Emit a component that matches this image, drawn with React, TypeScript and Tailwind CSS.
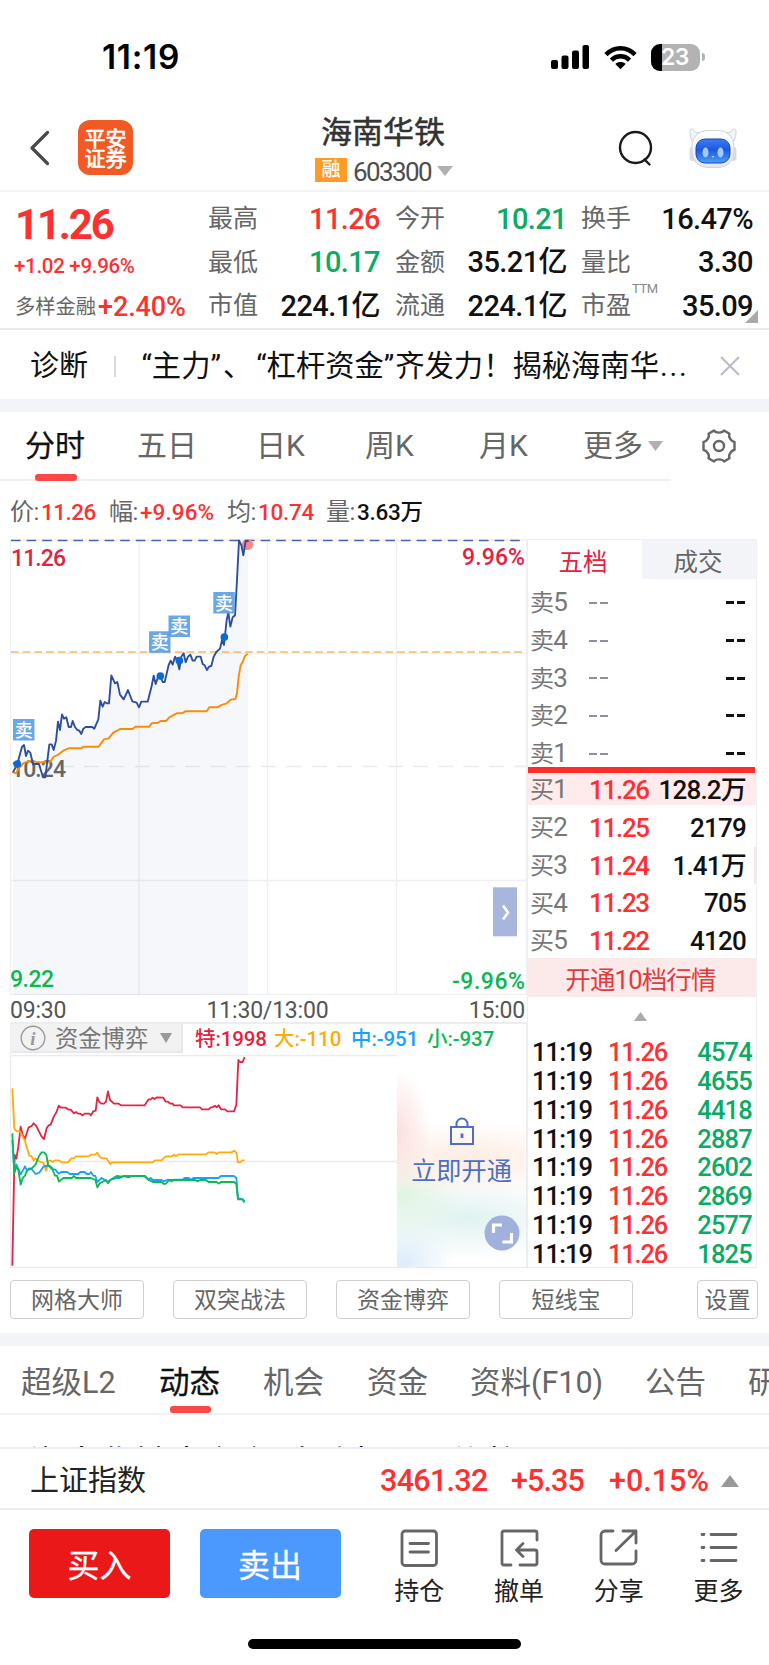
import React from "react";

const F = "font-['Roboto','Noto_Sans_CJK_SC',sans-serif]";

type Cell = [string, string, string];
const quotes: { w: string; pad: string; rows: Cell[] }[] = [
  {
    w: "w-[172px]",
    pad: "ml-0",
    rows: [
      ["最高", "11.26", "text-[#ff3030]"],
      ["最低", "10.17", "text-[#0aab64]"],
      ["市值", "224.1亿", "text-[#111]"],
    ],
  },
  {
    w: "w-[172px]",
    pad: "ml-[15px]",
    rows: [
      ["今开", "10.21", "text-[#0aab64]"],
      ["金额", "35.21亿", "text-[#111]"],
      ["流通", "224.1亿", "text-[#111]"],
    ],
  },
  {
    w: "w-[172px]",
    pad: "ml-[14px]",
    rows: [
      ["换手", "16.47%", "text-[#111]"],
      ["量比", "3.30", "text-[#111]"],
      ["市盈", "35.09", "text-[#111]"],
    ],
  },
];

const sells = ["卖5", "卖4", "卖3", "卖2", "卖1"];
const buys = [
  ["买1", "11.26", "128.2万"],
  ["买2", "11.25", "2179"],
  ["买3", "11.24", "1.41万"],
  ["买4", "11.23", "705"],
  ["买5", "11.22", "4120"],
];
const ticks = ["4574", "4655", "4418", "2887", "2602", "2869", "2577", "1825"];

function Down({ c = "#b0b0b0", w = 15, h = 10, up = false }: { c?: string; w?: number; h?: number; up?: boolean }) {
  return (
    <svg width={w} height={h} viewBox="0 0 16 10" preserveAspectRatio="none" className="shrink-0">
      <path d={up ? "M0 10h16L8 0z" : "M0 0h16L8 10z"} fill={c} />
    </svg>
  );
}

function StatusBar() {
  return (
    <div className="flex h-[100px] items-start pt-[36px]">
      <div className="ml-[102px] w-[449px] font-['Inter'] text-[33.500px] leading-[43px] font-semibold tracking-[0.700px] text-black">11:19</div>
      <svg width="38" height="24" viewBox="0 0 38 24" className="mt-[9px]">
        <rect x="0" y="15" width="7" height="9" rx="2" />
        <rect x="10.5" y="10.500" width="7" height="13.500" rx="2" />
        <rect x="21" y="5.500" width="7" height="18.500" rx="2" />
        <rect x="31.500" y="0" width="6.500" height="24" rx="2" />
      </svg>
      <svg width="33" height="25" viewBox="0 0 34 25" className="mt-[9px] ml-[15px]" fill="none" stroke="#000" strokeWidth="4.600">
        <path d="M2 9.500C10.500 0.800 23.500 0.800 32 9.500" />
        <path d="M7.600 15.200C13 10 21 10 26.400 15.200" />
        <path d="M17 24.500l-5.300-5.300c3-2.700 7.600-2.700 10.600 0z" fill="#000" stroke="none" />
      </svg>
      <div className="relative mt-[8px] ml-[14px] h-[27px] w-[49px] overflow-hidden rounded-[9px] bg-[#b3b3b3]">
        <div className="h-full w-[11px] bg-black" />
        <div className="absolute inset-0 pr-[1px] text-center font-['Inter'] text-[23px] leading-[27px] font-semibold tracking-[-0.500px] text-white">23</div>
      </div>
      <div className="mt-[17px] ml-[2px] h-[8px] w-[3px] rounded-r-[3px] bg-[#b3b3b3]" />
    </div>
  );
}

function Robot() {
  return (
    <svg width="48" height="40" viewBox="0 0 48 40">
      <defs>
        <linearGradient id="face" x1="0" y1="0" x2="0" y2="1">
          <stop offset="0" stopColor="#3f7df0" />
          <stop offset="0.450" stopColor="#1f58df" />
          <stop offset="1" stopColor="#4aa0f8" />
        </linearGradient>
        <linearGradient id="shell" x1="0" y1="0" x2="0" y2="1">
          <stop offset="0" stopColor="#fff" />
          <stop offset="1" stopColor="#e3e6ec" />
        </linearGradient>
      </defs>
      <path d="M3 13C.5 7 .5 2 2 1c1.800-1 3.500 3 6 3.500h32c2.500-.5 4.200-4.500 6-3.500 1.500 1 1.500 6-1 12z" fill="#f3f4f7" stroke="#cfd3da" strokeWidth="1" />
      <rect x="0.600" y="19" width="6" height="14" rx="3" fill="#d5d9e1" />
      <rect x="41.400" y="19" width="6" height="14" rx="3" fill="#d5d9e1" />
      <rect x="3" y="2.500" width="42" height="37" rx="15" fill="url(#shell)" stroke="#d0d4db" strokeWidth="1" />
      <rect x="7" y="11" width="34" height="24" rx="9" fill="url(#face)" stroke="#1746b8" strokeWidth="1" />
      <ellipse cx="16.500" cy="24.500" rx="3" ry="5" fill="#a0cbfa" />
      <ellipse cx="31.500" cy="24.500" rx="3" ry="5" fill="#a0cbfa" />
      <path d="M22.800 28h2.400L24 30z" fill="#cfe6ff" />
    </svg>
  );
}

function NavBar() {
  return (
    <div className="flex h-[92px] items-start border-b-2 border-[#f3f3f5]">
      <svg width="21" height="36" viewBox="0 0 21 36" className="mt-[30px] ml-[29px]" fill="none" stroke="#4a4a4a" strokeWidth="3.200" strokeLinecap="round" strokeLinejoin="round">
        <path d="M18.500 2.500L3 18l15.500 15.500" />
      </svg>
      <div className="mt-[20px] ml-[28px] flex h-[55px] w-[55px] flex-col items-center rounded-[12px] bg-[#f15a24] pt-[9px] text-[21px] leading-[20px] text-white [-webkit-text-stroke:0.700px_white]">
        <span>平安</span>
        <span>证券</span>
      </div>
      <div className="ml-[181px] flex w-[140px] flex-col">
        <div className="mt-[13px] ml-[7px] text-[31px] leading-[39px] whitespace-nowrap text-[#333] [-webkit-text-stroke:0.500px_#333]">海南华铁</div>
        <div className="mt-[5px] flex h-[27px] items-center">
          <div className="mt-[-1px] ml-[1px] h-[24px] w-[32px] bg-[#ff9a26] text-center text-[19px] leading-[24px] font-medium text-white">融</div>
          <div className="ml-[6px] w-[84px] pt-[3px] text-[26px] leading-[27px] tracking-[-1.600px] text-[#4d4d4d]">603300</div>
          <Down w={16} h={10} />
        </div>
      </div>
      <svg width="36" height="37" viewBox="0 0 36 37" className="mt-[30px] ml-[164px]" fill="none" stroke="#1a1a1a" strokeWidth="2.400" strokeLinecap="round">
        <circle cx="17.500" cy="17.500" r="15.500" />
        <path d="M26.500 29.500l5 5" />
      </svg>
      <div className="mt-[28px] ml-[35px]">
        <Robot />
      </div>
    </div>
  );
}

function Quote() {
  return (
    <div className="relative flex h-[138px] border-b-2 border-[#e8e8ef]">
      <div className="flex w-[208px] flex-col text-[#ff3030]">
        <div className="mt-[9px] ml-[15px] text-[42px] leading-[48px] font-bold tracking-[-2.200px]">11.26</div>
        <div className="mt-[4px] ml-[14px] text-[20.500px] leading-[26px] font-medium tracking-[-0.300px] whitespace-nowrap">+1.02 +9.96%</div>
        <div className="mt-[10px] ml-[15px] flex items-center whitespace-nowrap">
          <span className="w-[83px] text-[20.300px] leading-[36px] text-[#666]">多样金融</span>
          <span className="text-[27px] leading-[36px] font-medium tracking-[-0.100px]">+2.40%</span>
        </div>
      </div>
      <div className="flex pt-[5px]">
        {quotes.map((q, i) => (
          <div key={i} className={`${q.w} ${q.pad}`}>
            {q.rows.map(([l, v, c]) => (
              <div key={l} className="flex h-[43.500px] items-center justify-between">
                <span className="pt-[1px] text-[25px] leading-[40px] text-[#666]">{l}</span>
                <span className={`text-[29px] leading-[40px] font-medium tracking-[-0.600px] ${c}`}>{v}</span>
              </div>
            ))}
          </div>
        ))}
      </div>
      <span className="absolute top-[88px] left-[632px] text-[13px] leading-[18px] tracking-[-0.400px] text-[#888]">TTM</span>
      <svg width="13" height="13" className="absolute top-[118px] left-[745px]">
        <path d="M13 0v13H0z" fill="#a9a9a9" />
      </svg>
    </div>
  );
}

function News() {
  return (
    <div className="flex h-[69px] items-center pt-[3px] pl-[30px] text-[29px] leading-[40px] whitespace-nowrap text-[#111]">
      <span className="w-[84px]">诊断</span>
      <span className="mr-[26px] h-[21px] w-[1.500px] bg-[#d8d8dc]" />
      <span className="w-[578px] text-[29.300px]">
        “主力”<span className="ml-[2px] mr-[4px]">、</span>“杠杆资金”<span className="ml-[1px]">齐发力！揭秘海南华</span>
        <span className="ml-[1px] tracking-[1.800px]">...</span>
      </span>
      <svg width="20" height="20" viewBox="0 0 20 20" stroke="#b9b9cb" strokeWidth="2">
        <path d="M1 1l18 18M19 1L1 19" />
      </svg>
    </div>
  );
}

function ChartTabs() {
  return (
    <div className="flex h-[69px]">
      <div className="relative flex w-[671px] items-center border-b-2 border-[#f0f0f2] text-[30px] leading-[40px] whitespace-nowrap text-[#666]">
        <span className="ml-[25px] w-[112px] text-[#111] [-webkit-text-stroke:0.250px_#111]">分时</span>
        <span className="w-[119px]">五日</span>
        <span className="w-[109px]">日K</span>
        <span className="w-[114px]">周K</span>
        <span className="w-[104px]">月K</span>
        <span className="w-[65px]">更多</span>
        <Down w={15} h={10} />
        <span className="absolute top-[62px] left-[35px] h-[7px] w-[42px] rounded-[3px] bg-[#fc4747]" />
      </div>
      <svg width="36" height="36" viewBox="0 0 36 36" className="mt-[16px] ml-[30px]" fill="none" stroke="#666" strokeWidth="2.400" strokeLinejoin="round">
        <path d="M13 2.500c1.500 2.800 8.500 2.800 10 0l5.500 3.300c-1.500 3 1.700 8 5 8.200v8c-3.300.2-6.500 5.200-5 8.200L23 33.500c-1.500-2.800-8.500-2.800-10 0l-5.500-3.300c1.500-3-1.700-8-5-8.200v-8c3.300-.2 6.500-5.200 5-8.200z" />
        <circle cx="18" cy="18" r="5" />
      </svg>
    </div>
  );
}

function Legend() {
  const items = [
    ["价:", "11.26", "text-[#ff3030] tracking-[-0.500px]", "w-[99px]"],
    ["幅:", "+9.96%", "text-[#ff3030] tracking-[0.100px]", "w-[118px]"],
    ["均:", "10.74", "text-[#ff3030] tracking-[-0.300px]", "w-[99px]"],
    ["量:", "3.63万", "text-[#111] tracking-[-0.300px]", "w-[110px]"],
  ];
  return (
    <div className="flex h-[59px] items-center pt-[3px] pl-[10px] text-[22.500px] leading-[30px] whitespace-nowrap">
      {items.map(([l, v, c, w]) => (
        <div key={l} className={`${w} flex`}>
          <span className="w-[31px] text-[24px] tracking-[-0.500px] text-[#666]">{l}</span>
          <span className={`font-medium ${c}`}>{v}</span>
        </div>
      ))}
    </div>
  );
}

const price =
  "40,725 52,702 66,650 72,645 78,678 84,662 91,668 99,702 117,702 129,742 136,742 148,643 155,643 161,660 168,632 174,575 180,600 186,553 192,566 199,562 206,591 213,591 218,573 225,591 232,600 238,602 244,612 250,596 257,591 277,591 283,596 295,568 301,512 308,530 314,516 320,520 327,520 334,436 345,460 352,456 360,494 371,508 384,480 397,514 410,518 417,532 424,515 443,515 455,468 461,437 467,462 474,442 481,440 488,456 494,456 506,405 512,392 518,404 525,380 531,390 538,418 544,380 551,370 557,397 564,380 571,374 578,392 584,392 590,380 602,380 608,402 614,406 621,420 627,410 634,408 641,380 649,366 660,356 666,330 672,345 680,270 685,248 691,290 698,262 705,256 711,150 717,31 724,45 730,76 737,33 744,33";
const avg =
  "40,727 48,730 56,716 70,700 82,695 96,691 112,697 150,697 160,681 176,673 190,662 206,655 244,655 250,650 296,650 312,628 326,625 340,608 360,597 398,597 406,590 448,590 455,580 474,578 482,573 498,573 508,562 530,550 548,549 556,544 620,544 628,532 652,532 662,526 680,520 692,509 706,507 711,490 716,440 722,406 728,396 735,378 742,373";

function Mark({ x, y }: { x: number; y: number }) {
  return (
    <g>
      <rect x={x} y={y} width="21.500" height="21.500" fill="#5a9fe2" fillOpacity="0.900" />
      <text x={x + 10.75} y={y + 17.5} fontSize="18" fontWeight="500" fill="#fff" textAnchor="middle">卖</text>
    </g>
  );
}

function PriceChart() {
  return (
    <svg width="517" height="456" viewBox="10 539 517 456" className={`block ${F}`}>
      <g stroke="#efeff1" strokeWidth="1.300">
        <path d="M10.500 539.500V995M139 540V994M267.500 540V994M396.500 540V994M526.500 540V995M10 540H527M10 653.300H527M10 880.500H527M10 994.300H527" />
        <path d="M11 766.500H527" stroke="#ececee" strokeDasharray="15.300 10" strokeDashoffset="3" />
      </g>
      <g transform="translate(0 530) scale(0.33333)">
        <polygon points={`40,1394 ${price} 744,1394`} fill="#5b72b8" fillOpacity="0.055" />
      </g>
      <text x="11" y="776.500" fontSize="23" fontWeight="500" fill="#666" textLength="55" lengthAdjust="spacing">10.24</text>
      <path d="M11 540.500H522" stroke="#4664ae" strokeWidth="1.400" strokeDasharray="9.600 6" />
      <path d="M11 652H524" stroke="#fbb765" strokeWidth="1.500" strokeDasharray="7.700 4" />
      <circle cx="247.500" cy="544.500" r="5.600" fill="#ff8585" />
      <g transform="translate(0 530) scale(0.33333)" fill="none" strokeLinejoin="round" strokeLinecap="round">
        <polyline points={avg} stroke="#fb8c0a" strokeWidth="5.800" />
        <polyline points={price} stroke="#2c4e9b" strokeWidth="5.600" />
        <g fill="#0a6bd2">
          <circle cx="52" cy="702" r="11.500" />
          <circle cx="481" cy="438" r="11.500" />
          <circle cx="538" cy="392" r="11.500" />
          <circle cx="673" cy="321" r="11.500" />
        </g>
      </g>
      <Mark x={13} y={719} />
      <Mark x={149} y={631.300} />
      <Mark x={168.500} y={615.500} />
      <Mark x={213.300} y={592} />
      <g fontSize="23" fontWeight="500">
        <text x="11" y="566.300" fill="#e6213f" textLength="55" lengthAdjust="spacing">11.26</text>
        <text x="525" y="564.500" fill="#e6213f" textAnchor="end" textLength="63" lengthAdjust="spacing">9.96%</text>
        <text x="10" y="987" fill="#08b850" textLength="44" lengthAdjust="spacing">9.22</text>
        <text x="525" y="989" fill="#08b850" textAnchor="end" textLength="73" lengthAdjust="spacing">-9.96%</text>
      </g>
      <rect x="493" y="887.300" width="24" height="49" fill="#a8b6de" />
      <path d="M503 905.500l5 7-5 7" fill="none" stroke="#fff" strokeWidth="2.600" />
    </svg>
  );
}

const red =
  "37,857 42,600 44,525 49,536 55,500 62,440 68,465 75,476 86,442 95,438 101,430 108,437 125,470 132,477 140,445 146,436 152,434 160,413 170,395 176,377 184,383 198,383 206,389 212,389 222,400 228,396 234,401 241,401 248,406 254,401 268,401 273,406 280,394 287,392 292,352 298,366 305,371 312,371 318,365 324,334 330,360 342,371 356,371 363,376 434,376 446,358 452,358 458,353 464,357 470,352 490,353 497,365 504,365 510,371 517,370 522,376 542,376 548,382 600,382 606,388 626,388 632,382 638,382 645,377 650,382 656,376 663,388 675,388 682,394 702,394 709,375 715,240 720,246 728,246 734,231";
const gold =
  "37,325 43,446 49,453 60,454 75,483 88,527 95,529 101,541 107,535 119,545 131,549 138,572 146,543 152,541 158,546 164,541 178,541 184,547 204,547 214,535 221,535 228,529 267,529 273,524 286,524 292,518 299,530 306,535 319,535 331,552 337,547 458,547 465,541 484,541 497,529 516,529 522,524 528,529 535,523 618,523 625,517 644,517 650,522 656,517 695,517 702,512 709,518 714,547 720,547 727,541 734,541";
const blue =
  "37,480 43,575 49,553 62,583 75,559 81,572 87,565 95,567 107,582 119,577 130,560 138,558 150,558 160,568 165,568 176,581 184,576 202,576 209,582 235,582 241,576 254,576 260,582 268,582 273,576 280,587 286,588 292,606 305,594 314,600 324,606 331,600 350,594 360,594 371,588 434,588 446,600 452,594 458,600 484,600 492,604 504,599 516,604 522,599 548,599 554,594 566,594 573,600 580,594 656,594 663,588 702,588 709,594 714,655 728,658 733,668";
const green =
  "37,460 43,580 49,559 55,570 62,614 68,594 75,587 81,571 95,565 107,553 117,528 125,517 132,517 139,524 144,555 158,570 165,587 171,587 177,605 190,594 216,594 221,588 228,594 273,594 286,600 292,622 299,610 318,600 324,610 331,600 350,588 366,590 371,588 386,592 395,588 434,588 446,599 458,606 484,606 492,612 498,611 508,600 586,600 593,604 600,600 618,600 626,606 650,606 656,611 663,606 702,606 709,612 714,658 728,658 734,664";

function FlowChart() {
  return (
    <div className="relative h-[213px] w-[517px]">
      <svg width="517" height="213" viewBox="10 1055 517 213" className="block">
        <path d="M10.500 1055V1268M10 1055.700H397M10 1161.500H397M10 1267.300H527M526.500 1055V1268" stroke="#ebebed" strokeWidth="1.300" />
        <g transform="translate(0 980) scale(0.33333)" fill="none" strokeWidth="5.500" strokeLinejoin="round">
          <polyline points={red} stroke="#e32643" />
          <polyline points={gold} stroke="#ffab0e" />
          <polyline points={blue} stroke="#17a2fb" />
          <polyline points={green} stroke="#0cb957" />
        </g>
      </svg>
      <div className="absolute top-0 left-[387px] flex h-[212px] w-[129px] flex-col items-center bg-white bg-[radial-gradient(ellipse_34px_62px_at_0%_36%,#fbdede,transparent),radial-gradient(ellipse_125px_38px_at_55%_49%,#fdebe1,transparent),radial-gradient(ellipse_60px_44px_at_5%_66%,#e0f4e2,transparent),radial-gradient(ellipse_120px_42px_at_55%_77%,#e0f2f1,transparent),radial-gradient(ellipse_50px_46px_at_5%_98%,#dcecfa,transparent)]">
        <svg width="24" height="28" viewBox="0 0 24 28" className="mt-[62px]" fill="none" stroke="#4c70bf" strokeWidth="2">
          <rect x="1" y="10" width="22" height="17" />
          <path d="M6.500 10V7a5.500 5.500 0 0 1 11 0v3" />
          <path d="M12 16.500v4.500" strokeWidth="2.800" />
        </svg>
        <div className="mt-[9px] text-[25.200px] leading-[36px] text-[#4c70bf]">立即开通</div>
        <svg width="36" height="36" viewBox="0 0 36 36" className="absolute top-[160px] left-[87px]" fill="none" stroke="#fff" strokeWidth="3.200">
          <circle cx="18" cy="18" r="17.500" fill="#9fb1dc" stroke="none" />
          <path d="M9.500 18V10H18M18.500 27H27.500V18" />
        </svg>
      </div>
    </div>
  );
}

function LeftPanel() {
  return (
    <div className="w-[517px]">
      <PriceChart />
      <div className="flex h-[29px] justify-between border-b-2 border-[#ededef] pr-[2px] text-[23px] leading-[31px] tracking-[-0.200px] text-[#555]">
        <span className="w-[100px]">09:30</span>
        <span>11:30/13:00</span>
        <span className="w-[100px] text-right">15:00</span>
      </div>
      <div className="flex h-[31px] items-start border-x border-[#ededef] text-[20.500px] leading-[30px] font-medium tracking-[-0.100px] whitespace-nowrap">
        <div className="mr-[12px] flex h-[29px] w-[172px] items-center border-r-2 border-b-2 border-[#e8e8ea] bg-[#f2f2f3] text-[23.300px] leading-[28px] font-normal tracking-normal text-[#777]">
          <svg width="26" height="26" viewBox="0 0 26 26" className="mr-[9px] ml-[9px]">
            <circle cx="13" cy="13" r="11.800" fill="none" stroke="#999" strokeWidth="1.400" />
            <text x="13" y="19.500" fontSize="19" fontStyle="italic" fontWeight="700" fontFamily="Liberation Serif" fill="#999" textAnchor="middle">i</text>
          </svg>
          <span className="w-[105px] pt-[2px]">资金博弈</span>
          <Down w={12} h={10} c="#999" />
        </div>
        <span className="w-[79px] text-[#e6213f]">特:1998</span>
        <span className="w-[77px] text-[#ffab0e]">大:-110</span>
        <span className="w-[76px] text-[#17a2fb]">中:-951</span>
        <span className="text-[#0cb957]">小:-937</span>
      </div>
      <FlowChart />
    </div>
  );
}

function OrderBook() {
  return (
    <div className="flex h-[729px] w-[230px] flex-col border border-[#efeff1] text-[25.500px] leading-[36px] tracking-[-0.800px]">
      <div className="flex h-[39px] text-center text-[24.500px] leading-[45px] tracking-normal">
        <div className="w-[114px] pr-[4px] text-[#e6213f]">五档</div>
        <div className="flex-1 bg-[#f2f4f8] pr-[2px] text-[#666]">成交</div>
      </div>
      <div className="flex h-[188px] flex-col pt-[5px]">
        {sells.map((s) => (
          <div key={s} className="flex h-[37.700px] shrink-0 items-center pr-[11px] pl-[2px]">
            <span className="w-[59px] text-[26px] text-[#777]"><span className="text-[24px]">{s[0]}</span>{s[1]}</span>
            <span className="flex w-[60px] gap-[3px]"><i className="h-[2px] w-[8px] bg-[#8f8f9c]" /><i className="h-[2px] w-[8px] bg-[#8f8f9c]" /></span>
            <span className="flex flex-1 justify-end gap-[3px]"><i className="h-[3px] w-[8px] bg-[#111]" /><i className="h-[3px] w-[8px] bg-[#111]" /></span>
          </div>
        ))}
      </div>
      <div className="mr-[1px] h-[6px] shrink-0 bg-[#fb2c2c]" />
      <div className="flex flex-col">
        {buys.map(([l, p, v], i) => (
          <div key={l} className={`flex items-center pl-[2px] ${i === 0 ? "mb-[4px] h-[32px] bg-[#ffebeb] pt-[1px]" : "h-[37.700px]"} ${i === 2 ? "border-r-2 border-[#fde3e3] pr-[8px]" : "pr-[10px]"}`}>
            <span className="w-[59px] text-[26px] text-[#777]"><span className="text-[24px]">{l[0]}</span>{l[1]}</span>
            <span className="text-[26px] font-medium tracking-[-1.300px] text-[#ff3030]">{p}</span>
            <span className="flex-1 text-right text-[26px] font-medium text-[#111]">{v}</span>
          </div>
        ))}
      </div>
      <div className="mt-[-2px] h-[39px] shrink-0 bg-[#fce9ea] pr-[3px] text-center text-[25.500px] leading-[44px] text-[#e03c3c]">开通10档行情</div>
      <div className="flex h-[40px] shrink-0 items-center justify-center pr-[3px]">
        <Down up w={13} h={9} c="#aaa" />
      </div>
      <div className="flex flex-col pt-[1px] pr-[4px] pl-[4px] font-medium">
        {ticks.map((t) => (
          <div key={t} className="flex h-[28.800px] items-center">
            <span className="w-[76px] tracking-[-0.900px] text-[#111]">11:19</span>
            <span className="tracking-[-1.200px] text-[#ff3030]">11.26</span>
            <span className="flex-1 text-right text-[#0aab64]">{t}</span>
          </div>
        ))}
      </div>
    </div>
  );
}

function Tools() {
  const box = "box-border h-[39px] rounded-[4px] border-[1.500px] border-[#cfcfcf] text-center leading-[39px]";
  return (
    <div className="flex h-[65px] items-start pt-[12px] pl-[10px] text-[23px] text-[#666]">
      {["网格大师", "双突战法", "资金博弈", "短线宝"].map((t) => (
        <div key={t} className={`${box} mr-[29px] w-[134px]`}>{t}</div>
      ))}
      <div className={`${box} ml-[35px] w-[61px]`}>设置</div>
    </div>
  );
}

function InfoTabs() {
  return (
    <div className="relative flex h-[69px] items-center overflow-hidden border-b-2 border-[#f1f2f5] pt-[6px] pl-[21px] text-[30.500px] leading-[40px] whitespace-nowrap text-[#666]">
      <span className="w-[138px] shrink-0">超级L2</span>
      <span className="w-[104px] shrink-0 text-[#111] [-webkit-text-stroke:0.300px_#111]">动态</span>
      <span className="w-[104px] shrink-0">机会</span>
      <span className="w-[103px] shrink-0">资金</span>
      <span className="w-[175px] shrink-0">资料(F10)</span>
      <span className="w-[103px] shrink-0">公告</span>
      <span className="shrink-0">研究</span>
      <span className="absolute top-[60px] left-[169.500px] h-[7px] w-[41px] rounded-[3px] bg-[#fc4747]" />
    </div>
  );
}

function BottomBar() {
  const icons: [string, React.ReactNode][] = [
    ["持仓", <g key="a"><rect x="2" y="2" width="34.500" height="34.500" rx="3" /><path d="M10 14.500h18.500M10 23h18.500" /></g>],
    ["撤单", <g key="b"><path d="M37 11V4a2 2 0 0 0-2-2H4a2 2 0 0 0-2 2v30a2 2 0 0 0 2 2h7M20 36h15a2 2 0 0 0 2-2V23a2 2 0 0 0-2-2H17.500M23 14.500L16.500 21l6.500 6.500" /></g>],
    ["分享", <g key="c"><path d="M14 2H6a4 4 0 0 0-4 4v25a4 4 0 0 0 4 4h27a4 4 0 0 0 4-4V22M24 2h13v12M37 2L17 21.500" /></g>],
    ["更多", <g key="d"><path d="M3 5.500h2M12 5.500h25M3 18.500h2M12 18.500h25M3 31.500h2M12 31.500h25" /></g>],
  ];
  return (
    <div className="flex items-start pt-[19px] pl-[29px]">
      <div className="h-[69px] w-[141px] rounded-[5px] bg-[#ea1818] text-center text-[32px] leading-[74px] text-white [-webkit-text-stroke:0.300px_white]">买入</div>
      <div className="ml-[29.500px] h-[69px] w-[141px] rounded-[5px] bg-[#4b99ff] text-center text-[32px] leading-[74px] text-white [-webkit-text-stroke:0.300px_white]">卖出</div>
      <div className="ml-[29px] flex">
        {icons.map(([l, g]) => (
          <div key={l} className="flex w-[99.700px] flex-col items-center text-[25px] leading-[36px] text-[#222]">
            <svg width="39" height="39" viewBox="0 0 39 39" fill="none" stroke="#666" strokeWidth="2.800" strokeLinecap="round" strokeLinejoin="round">{g}</svg>
            <span className="mt-[6px]">{l}</span>
          </div>
        ))}
      </div>
    </div>
  );
}

export default function App() {
  return (
    <div className={`flex h-[1665px] w-[769px] flex-col overflow-hidden bg-white ${F}`}>
      <StatusBar />
      <NavBar />
      <Quote />
      <News />
      <div className="h-[13px] shrink-0 bg-[#f2f4f8]" />
      <ChartTabs />
      <Legend />
      <div className="mt-[-1px] flex pl-[10px]">
        <LeftPanel />
        <OrderBook />
      </div>
      <Tools />
      <div className="h-[13px] shrink-0 bg-[#f2f4f8]" />
      <InfoTabs />
      <div className="h-[32px] shrink-0 overflow-hidden pt-[26px] pl-[29px] text-[35px] leading-[48px] whitespace-nowrap text-[#111]">海南华铁大主主时到点一股价数</div>
      <div className="flex h-[63px] shrink-0 items-center border-y-2 border-[#ededef] pt-[4px] pl-[30px] text-[29px] leading-[40px] whitespace-nowrap">
        <span className="w-[350px] text-[#222]">上证指数</span>
        <span className="w-[131px] text-[30.500px] font-medium tracking-[-0.700px] text-[#ff3030]">3461.32</span>
        <span className="w-[98px] text-[30.500px] font-medium tracking-[-0.900px] text-[#ff3030]">+5.35</span>
        <span className="w-[112px] text-[30.500px] font-medium text-[#ff3030]">+0.15%</span>
        <Down up w={18} h={12} c="#999" />
      </div>
      <BottomBar />
      <div className="mt-auto mb-[16px] ml-[248px] h-[10px] w-[273px] shrink-0 rounded-full bg-black" />
    </div>
  );
}
